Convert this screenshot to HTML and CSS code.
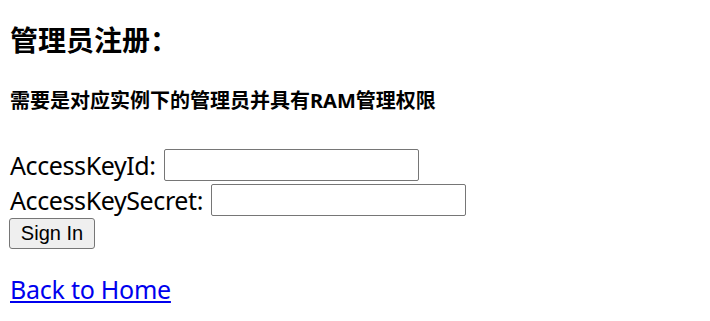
FILE: index.html
```html
<!DOCTYPE html>
<html lang="zh-CN">
<head>
<meta charset="utf-8">
<title>管理员注册</title>
<link rel="stylesheet" href="styles.css">
</head>
<body>
<h2 class="title">管理员注册：</h2>
<h4 class="subtitle">需要是对应实例下的管理员并具有RAM管理权限</h4>
<form class="form">
  <div class="row"><label for="kid">AccessKeyId:</label> <input id="kid" class="field" type="text"></div>
  <div class="row"><label for="ksec">AccessKeySecret:</label> <input id="ksec" class="field" type="password"></div>
  <button class="btn" type="button">Sign In</button>
</form>
<p class="back"><a class="link" href="#">Back to Home</a></p>
</body>
</html>
```
FILE: styles.css
```css
html, body {
  margin: 0;
  padding: 0;
  background: #fff;
  color: #000;
}
body {
  padding: 0 10px;
  font-family: "Noto Sans", "Noto Sans CJK SC", sans-serif;
}
.title {
  margin: 21px 0 0;
  font-family: "Noto Sans CJK SC", sans-serif;
  font-size: 28px;
  font-weight: 700;
  line-height: 36px;
}
.subtitle {
  margin: 30px 0 0;
  font-family: "Noto Sans", "Noto Sans CJK SC", sans-serif;
  font-size: 20px;
  font-weight: 700;
  line-height: 28px;
}
.form {
  margin-top: 32px;
  font-size: 25px;
  letter-spacing: -0.4px;
}
.row {
  height: 35px;
  display: flex;
  align-items: center;
}
.row label {
  margin-right: 8px;
}
.field {
  box-sizing: border-box;
  width: 255px;
  height: 32px;
  margin: 0;
  border: 1px solid #767676;
  border-radius: 2px;
  background: #fff;
  font-size: 20px;
}
.btn {
  box-sizing: border-box;
  display: block;
  width: 86px;
  height: 31px;
  margin: 1px 0 0 -1px;
  padding: 0;
  border: 1px solid #767676;
  border-radius: 3px;
  background: #efefef;
  color: #000;
  font-family: "Liberation Sans", Arial, sans-serif;
  font-size: 20px;
  letter-spacing: 0;
}
.back {
  margin: 23px 0 0;
  font-size: 25px;
  line-height: 34px;
  letter-spacing: -0.25px;
}
.link {
  color: #0000ee;
  text-decoration: underline;
}
```
